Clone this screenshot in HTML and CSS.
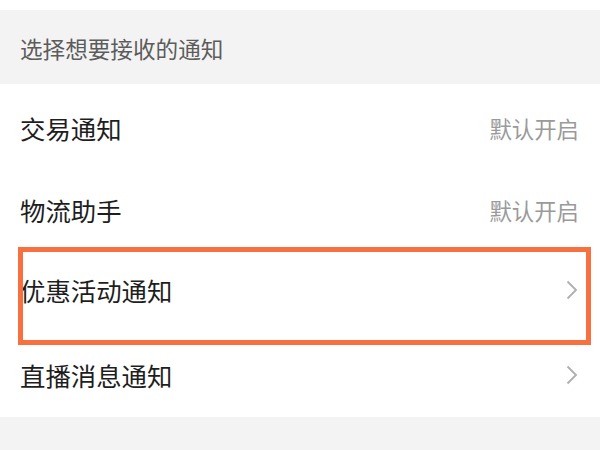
FILE: index.html
```html
<!DOCTYPE html>
<html lang="zh">
<head>
<meta charset="utf-8">
<link rel="stylesheet" href="styles.css">
</head>
<body>
<div class="page">
  <div class="top-gap"></div>
  <div class="section-head">选择想要接收的通知</div>
  <div class="list">
    <div class="row row-1">
      <span class="label">交易通知</span>
      <span class="value">默认开启</span>
    </div>
    <div class="row row-2">
      <span class="label">物流助手</span>
      <span class="value">默认开启</span>
    </div>
    <div class="row row-3">
      <span class="label">优惠活动通知</span>
      <svg class="chev" viewBox="0 0 12 20" width="12" height="20"><path d="M1.5 1.5 L10 10 L1.5 18.5" fill="none" stroke="#b0b0b0" stroke-width="1.9"/></svg>
      <div class="highlight"></div>
    </div>
    <div class="row row-4">
      <span class="label">直播消息通知</span>
      <svg class="chev" viewBox="0 0 12 20" width="12" height="20"><path d="M1.5 1.5 L10 10 L1.5 18.5" fill="none" stroke="#b0b0b0" stroke-width="1.9"/></svg>
    </div>
  </div>
  <div class="bottom-gap"></div>
</div>
</body>
</html>
```

FILE: styles.css
```css
html, body {
  margin: 0;
  padding: 0;
  background: #ffffff;
}
body {
  font-family: "Noto Sans CJK SC", "Noto Sans", sans-serif;
  width: 600px;
  height: 450px;
  overflow: hidden;
}
.page {
  display: flex;
  flex-direction: column;
  width: 600px;
  height: 450px;
}
.top-gap {
  height: 10px;
  background: #ffffff;
}
.section-head {
  height: 74px;
  background: #f3f3f3;
  color: #5c5c5c;
  font-size: 22.6px;
  line-height: 23px;
  padding-left: 20px;
  display: flex;
  align-items: center;
  padding-top: 2px;
  box-sizing: border-box;
}
.list {
  display: flex;
  flex-direction: column;
  background: #ffffff;
}
.row {
  position: relative;
  display: flex;
  align-items: center;
  justify-content: space-between;
  padding: 0 21px 0 20px;
}
.row-1 { height: 88px; }
.row-2 { height: 76px; }
.row-3 { height: 84px; }
.row-4 { height: 85px; }
.label {
  font-size: 25.4px;
  line-height: 26px;
  color: #1e1e1e;
}
.value {
  font-size: 22.4px;
  line-height: 23px;
  color: #9a9a9a;
}
.chev {
  display: block;
  margin-right: 1px;
}
.highlight {
  position: absolute;
  left: 18px;
  top: -1px;
  width: 573px;
  height: 98px;
  border: 5px solid #f87040;
  box-sizing: border-box;
  pointer-events: none;
}
.bottom-gap {
  flex: 1;
  background: #f3f3f3;
}
```
